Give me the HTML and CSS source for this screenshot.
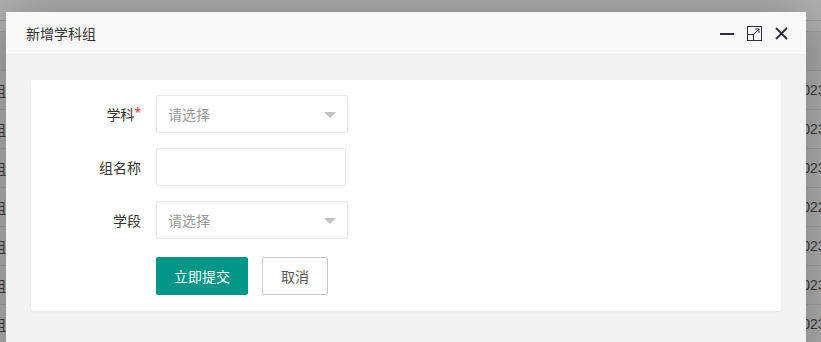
FILE: index.html
```html
<!DOCTYPE html>
<html lang="zh-CN">
<head>
    <meta charset="UTF-8" name="viewport" content="width=device-width, initial-scale=1.0">
    <title>新增学科组</title>
    <link rel="stylesheet" href="styles.css">
</head>
<body>
<!-- Page behind the dialog: list of subject groups -->
<div class="page">
    <div class="topbar"></div>
    <div class="tabbar"></div>
    <div class="thead"></div>
    <div class="row"><span class="cell-left">组</span><span class="cell-right">2023-03-01</span></div>
    <div class="row"><span class="cell-left">组</span><span class="cell-right">2023-03-01</span></div>
    <div class="row"><span class="cell-left">组</span><span class="cell-right">2023-02-16</span></div>
    <div class="row"><span class="cell-left">组</span><span class="cell-right">2022-12-20</span></div>
    <div class="row"><span class="cell-left">组</span><span class="cell-right">2023-01-05</span></div>
    <div class="row"><span class="cell-left">组</span><span class="cell-right">2023-01-05</span></div>
    <div class="row"><span class="cell-left">组</span><span class="cell-right">2023-01-05</span></div>
</div>
<div class="shade"></div>

<!-- Dialog -->
<div class="layer">
    <div class="layer-title">
        <span>新增学科组</span>
        <div class="layer-tools">
            <svg width="14" height="14" viewBox="0 0 14 14">
                <line x1="0" y1="8" x2="14" y2="8" stroke="#2e2d3c" stroke-width="2"/>
            </svg>
            <svg width="15" height="15" viewBox="0 0 15 15">
                <rect x="0.5" y="0.5" width="14" height="14" fill="none" stroke="#2e2d3c" stroke-width="1"/>
                <rect x="0.5" y="8.5" width="6" height="6" fill="none" stroke="#2e2d3c" stroke-width="1"/>
                <line x1="7" y1="8" x2="12" y2="3" stroke="#2e2d3c" stroke-width="1"/>
                <polyline points="8,3 12,3 12,7" fill="none" stroke="#2e2d3c" stroke-width="1"/>
            </svg>
            <svg width="13" height="13" viewBox="0 0 13 13">
                <line x1="1" y1="1" x2="12" y2="12" stroke="#2e2d3c" stroke-width="1.8"/>
                <line x1="12" y1="1" x2="1" y2="12" stroke="#2e2d3c" stroke-width="1.8"/>
            </svg>
        </div>
    </div>
    <div class="layer-body">
        <form class="card">
            <div class="form-item">
                <label class="form-label">学科<span class="required">*</span></label>
                <div class="select">
                    <span class="placeholder">请选择</span>
                    <i class="caret"></i>
                </div>
            </div>
            <div class="form-item">
                <label class="form-label">组名称</label>
                <input class="text-input" type="text" name="name">
            </div>
            <div class="form-item">
                <label class="form-label">学段</label>
                <div class="select">
                    <span class="placeholder">请选择</span>
                    <i class="caret"></i>
                </div>
            </div>
            <div class="form-item form-buttons">
                <button type="button" class="btn btn-primary">立即提交</button>
                <button type="button" class="btn btn-default">取消</button>
            </div>
        </form>
    </div>
</div>
</body>
</html>
```

FILE: styles.css
```css
* {
    padding: 0;
    margin: 0;
    box-sizing: border-box;
    font-family: "Noto Sans", "Noto Sans CJK SC", sans-serif;
}

body {
    width: 821px;
    height: 342px;
    overflow: hidden;
    position: relative;
    background: #ffffff;
    font-size: 14px;
    color: #333333;
}

/* Background page */
.page {
    display: flex;
    flex-direction: column;
}

.topbar {
    height: 21px;
    border-bottom: 1px solid #e6e6e6;
}

.tabbar {
    height: 11px;
    border-bottom: 1px solid #e6e6e6;
}

.thead {
    height: 39px;
    background: #f2f2f2;
    border-bottom: 1px solid #e6e6e6;
}

.row {
    height: 39px;
    display: flex;
    align-items: center;
    justify-content: space-between;
    border-bottom: 1px solid #e6e6e6;
    background: #fafafa;
    color: #555555;
    font-size: 14px;
    white-space: nowrap;
}

.cell-left {
    margin-left: -8px;
}

.cell-right {
    margin-right: -45px;
    font-family: "Liberation Sans", sans-serif;
}

.shade {
    position: absolute;
    inset: 0;
    background: rgba(0, 0, 0, 0.3);
}

/* Dialog */
.layer {
    position: absolute;
    top: 12px;
    left: 6px;
    width: 800px;
    height: 360px;
    background: #f2f2f2;
    box-shadow: 1px 1px 50px rgba(0, 0, 0, 0.3);
}

.layer-title {
    height: 43px;
    display: flex;
    align-items: center;
    justify-content: space-between;
    padding: 0 18px 0 20px;
    background: #f8f8f8;
    border-bottom: 1px solid #eeeeee;
    color: #333333;
    font-size: 14px;
}

.layer-tools {
    display: flex;
    align-items: center;
    gap: 13px;
}

.layer-tools svg {
    display: block;
}

.layer-body {
    padding: 25px;
}

.card {
    background: #ffffff;
    border-radius: 2px;
    box-shadow: 0 1px 2px 0 rgba(0, 0, 0, 0.05);
    padding: 15px 0 16px;
}

.form-item {
    display: flex;
    align-items: center;
    margin-bottom: 15px;
}

.form-label {
    width: 110px;
    margin-right: 15px;
    text-align: right;
    color: #333333;
}

.required {
    color: #ff2d2d;
    font-size: 12px;
    position: relative;
    top: -3px;
}

.select {
    position: relative;
    width: 192px;
    height: 38px;
    border: 1px solid #e6e6e6;
    border-radius: 2px;
    padding-left: 11px;
    display: flex;
    align-items: center;
}

.placeholder {
    color: #999999;
}

.caret {
    position: absolute;
    top: 16px;
    right: 11px;
    border-style: solid;
    border-width: 6px 6px 0;
    border-color: #c2c2c2 transparent transparent;
}

.text-input {
    width: 190px;
    height: 38px;
    border: 1px solid #e6e6e6;
    border-radius: 2px;
    padding-left: 11px;
    outline: none;
    font-size: 14px;
}

.form-buttons {
    margin: 18px 0 0 125px;
    gap: 14px;
}

.btn {
    height: 38px;
    padding: 0 18px;
    border-radius: 2px;
    font-size: 14px;
    cursor: pointer;
}

.btn-primary {
    background: #009688;
    border: none;
    color: #ffffff;
}

.btn-default {
    background: #ffffff;
    border: 1px solid #c9c9c9;
    color: #555555;
}
```
